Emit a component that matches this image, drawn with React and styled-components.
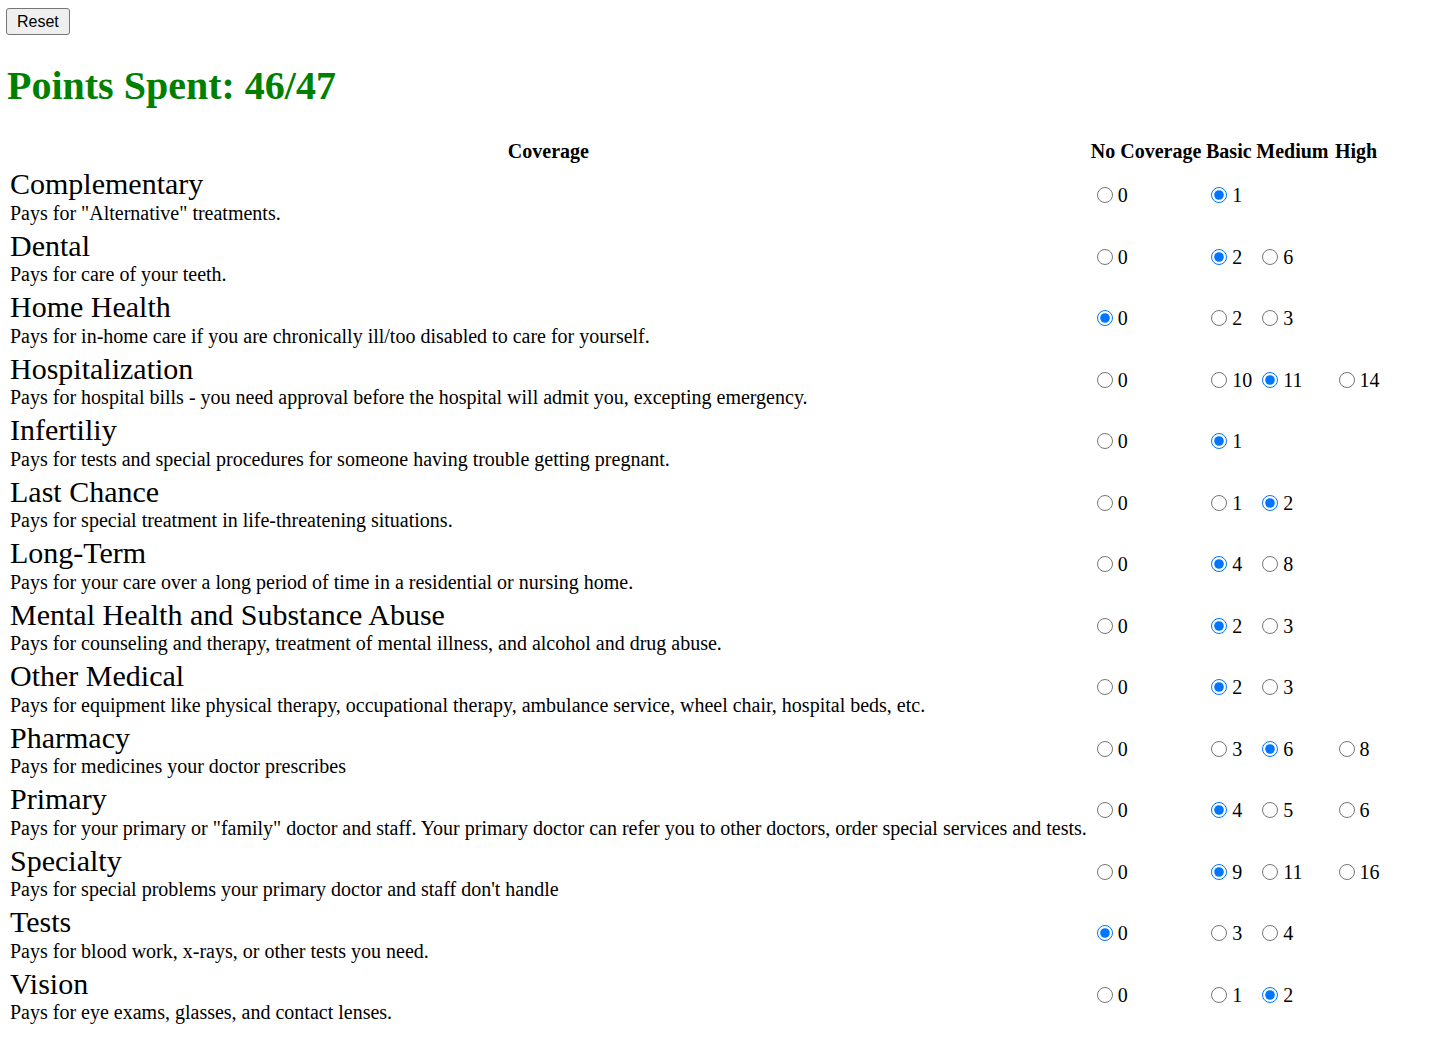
import React, { useState } from "react";
import styled, { createGlobalStyle } from "styled-components";

const Global = createGlobalStyle`
  html, body { margin: 0; padding: 0; background: #fff; }
  body { font-family: "Liberation Serif", "Times New Roman", serif; color: #000; }
`;

const Page = styled.div`
  padding: 8px 7px;
`;

const ResetButton = styled.button`
  margin-left: -1px;
  font-family: "Liberation Sans", Arial, sans-serif;
  font-size: 16px;
  line-height: 19px;
  height: 27px;
  padding: 0 10px;
  border: 1px solid #767676;
  border-radius: 3px;
  background: #efefef;
  color: #000;
  cursor: pointer;
`;

const Title = styled.h1`
  font-size: 40px;
  font-weight: bold;
  color: #008000;
  margin: 27px 0 28px;
`;

const Table = styled.table`
  font-size: 20px;
  border-spacing: 2px;
`;

const HeadCell = styled.th`
  padding: 1px;
  font-weight: bold;
  text-align: center;
  line-height: 23px;
`;

const Cell = styled.td`
  padding: 1px;
  vertical-align: middle;
  white-space: nowrap;
`;

const Name = styled.div`
  font-size: 30px;
  line-height: 34.5px;
`;

const Desc = styled.div`
  line-height: 23px;
`;

const Radio = styled.input`
  width: 16px;
  height: 16px;
  margin: 3px 0 0 6px;
  vertical-align: -1px;
`;

const Option = styled.label`
  cursor: pointer;
`;

const levels = ["none", "basic", "medium", "high"];

const coverages = [
  { name: "Complementary", desc: 'Pays for "Alternative" treatments.', opts: [0, 1, null, null], sel: 1 },
  { name: "Dental", desc: "Pays for care of your teeth.", opts: [0, 2, 6, null], sel: 1 },
  { name: "Home Health", desc: "Pays for in-home care if you are chronically ill/too disabled to care for yourself.", opts: [0, 2, 3, null], sel: 0 },
  { name: "Hospitalization", desc: "Pays for hospital bills - you need approval before the hospital will admit you, excepting emergency.", opts: [0, 10, 11, 14], sel: 2 },
  { name: "Infertiliy", desc: "Pays for tests and special procedures for someone having trouble getting pregnant.", opts: [0, 1, null, null], sel: 1 },
  { name: "Last Chance", desc: "Pays for special treatment in life-threatening situations.", opts: [0, 1, 2, null], sel: 2 },
  { name: "Long-Term", desc: "Pays for your care over a long period of time in a residential or nursing home.", opts: [0, 4, 8, null], sel: 1 },
  { name: "Mental Health and Substance Abuse", desc: "Pays for counseling and therapy, treatment of mental illness, and alcohol and drug abuse.", opts: [0, 2, 3, null], sel: 1 },
  { name: "Other Medical", desc: "Pays for equipment like physical therapy, occupational therapy, ambulance service, wheel chair, hospital beds, etc.", opts: [0, 2, 3, null], sel: 1 },
  { name: "Pharmacy", desc: "Pays for medicines your doctor prescribes", opts: [0, 3, 6, 8], sel: 2 },
  { name: "Primary", desc: 'Pays for your primary or "family" doctor and staff. Your primary doctor can refer you to other doctors, order special services and tests.', opts: [0, 4, 5, 6], sel: 1 },
  { name: "Specialty", desc: "Pays for special problems your primary doctor and staff don't handle", opts: [0, 9, 11, 16], sel: 1 },
  { name: "Tests", desc: "Pays for blood work, x-rays, or other tests you need.", opts: [0, 3, 4, null], sel: 0 },
  { name: "Vision", desc: "Pays for eye exams, glasses, and contact lenses.", opts: [0, 1, 2, null], sel: 2 },
];

const initial = coverages.map((c) => c.sel);

export default function App() {
  const [sel, setSel] = useState(initial);
  const spent = coverages.reduce((s, c, i) => s + (c.opts[sel[i]] || 0), 0);

  return (
    <Page>
      <Global />
      <ResetButton type="button" onClick={() => setSel(initial)}>Reset</ResetButton>
      <Title>Points Spent: {spent}/47</Title>
      <Table>
        <thead>
          <tr>
            <HeadCell>Coverage</HeadCell>
            <HeadCell>No Coverage</HeadCell>
            <HeadCell>Basic</HeadCell>
            <HeadCell>Medium</HeadCell>
            <HeadCell>High</HeadCell>
          </tr>
        </thead>
        <tbody>
          {coverages.map((c, i) => (
            <tr key={c.name}>
              <Cell>
                <Name>{c.name}</Name>
                <Desc>{c.desc}</Desc>
              </Cell>
              {c.opts.map((v, j) => (
                <Cell key={levels[j]}>
                  {v !== null && (
                    <Option>
                      <Radio
                        type="radio"
                        name={c.name}
                        checked={sel[i] === j}
                        onChange={() => setSel((s) => s.map((x, k) => (k === i ? j : x)))}
                      />{" "}
                      {v}
                    </Option>
                  )}
                </Cell>
              ))}
            </tr>
          ))}
        </tbody>
      </Table>
    </Page>
  );
}
